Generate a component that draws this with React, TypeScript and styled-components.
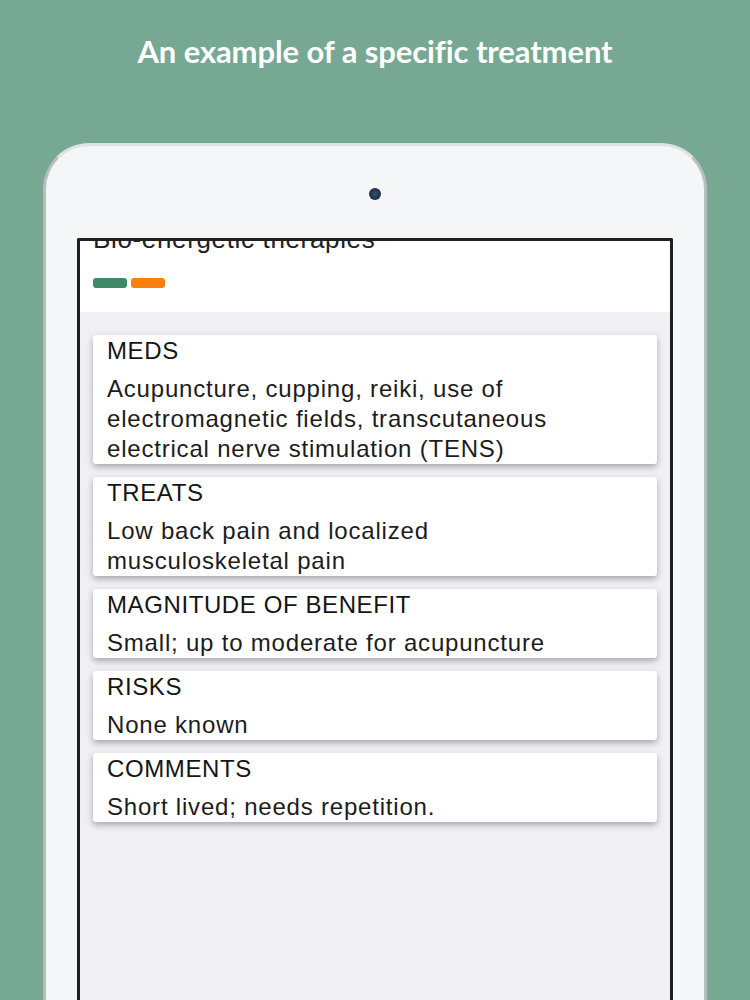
import React from 'react';
import styled, { createGlobalStyle } from 'styled-components';

const GlobalStyle = createGlobalStyle`
  html, body {
    margin: 0;
    padding: 0;
    background: #76a893;
  }
  body {
    font-family: "Liberation Sans", Arial, sans-serif;
  }
`;

const Page = styled.div`
  width: 750px;
  height: 1000px;
  overflow: hidden;
  display: flex;
  flex-direction: column;
  background: #76a893;
`;

const Headline = styled.h1`
  margin: 0;
  height: 143px;
  box-sizing: border-box;
  padding-top: 31px;
  text-align: center;
  font-family: Lato, "Open Sans", sans-serif;
  font-weight: 700;
  font-size: 31px;
  line-height: 40px;
  color: #ffffff;
  letter-spacing: -0.1px;
`;

const Device = styled.div`
  flex: 1;
  margin: 0 43px;
  box-sizing: border-box;
  display: flex;
  flex-direction: column;
  align-items: center;
  padding: 0 31px;
  background: #f4f6f8;
  border: 3px solid;
  border-color: #dfe2e4 #b9bdc0 transparent #b9bdc0;
  border-bottom: none;
  border-radius: 46px 46px 0 0;
`;

const Camera = styled.div`
  width: 12px;
  height: 12px;
  margin: 42px 0 38px;
  border-radius: 50%;
  background: radial-gradient(circle at 50% 50%, #34507a 0%, #263246 55%, #1c2330 100%);
`;

const Screen = styled.div`
  align-self: stretch;
  flex: 1;
  display: flex;
  flex-direction: column;
  border: 3px solid #202020;
  border-bottom: none;
  border-radius: 2px 2px 0 0;
  background: #efeff4;
  overflow: hidden;
`;

const Header = styled.div`
  height: 71px;
  box-sizing: border-box;
  background: #ffffff;
  padding: 0 13px;
  overflow: hidden;
`;

const HeaderTitle = styled.div`
  margin-top: -17px;
  font-size: 26px;
  line-height: 30px;
  letter-spacing: 0.65px;
  color: #222222;
  white-space: nowrap;
`;

const Tags = styled.div`
  display: flex;
  gap: 4px;
  margin-top: 24px;
`;

const Tag = styled.span<{ $color: string }>`
  width: 34px;
  height: 10px;
  border-radius: 3px;
  background: ${(p) => p.$color};
`;

const List = styled.div`
  display: flex;
  flex-direction: column;
  gap: 13px;
  padding: 23px 13px;
`;

const Card = styled.section`
  background: #ffffff;
  border-radius: 3px;
  padding: 1px 14px 0;
  box-shadow: 0 3px 6px rgba(0, 0, 0, 0.3);
`;

const CardTitle = styled.h2`
  margin: 0 0 8px;
  font-size: 24px;
  font-weight: 400;
  line-height: 30px;
  letter-spacing: 0.6px;
  color: #151515;
`;

const CardBody = styled.p`
  margin: 0;
  font-size: 24px;
  line-height: 30px;
  letter-spacing: 0.8px;
  color: #1c1c1c;
`;

const sections = [
  {
    title: 'MEDS',
    body: [
      'Acupuncture, cupping, reiki, use of',
      'electromagnetic fields, transcutaneous',
      'electrical nerve stimulation (TENS)',
    ],
  },
  {
    title: 'TREATS',
    body: ['Low back pain and localized', 'musculoskeletal pain'],
  },
  {
    title: 'MAGNITUDE OF BENEFIT',
    body: ['Small; up to moderate for acupuncture'],
  },
  { title: 'RISKS', body: ['None known'] },
  { title: 'COMMENTS', body: ['Short lived; needs repetition.'] },
];

export default function App() {
  return (
    <>
      <GlobalStyle />
      <Page>
        <Headline>An example of a specific treatment</Headline>
        <Device>
          <Camera />
          <Screen>
            <Header>
              <HeaderTitle>Bio-energetic therapies</HeaderTitle>
              <Tags>
                <Tag $color="#3f8a6b" />
                <Tag $color="#fb7f0c" />
              </Tags>
            </Header>
            <List>
              {sections.map((s) => (
                <Card key={s.title}>
                  <CardTitle>{s.title}</CardTitle>
                  <CardBody>
                    {s.body.map((line, i) => (
                      <React.Fragment key={i}>
                        {i > 0 && <br />}
                        {line}
                      </React.Fragment>
                    ))}
                  </CardBody>
                </Card>
              ))}
            </List>
          </Screen>
        </Device>
      </Page>
    </>
  );
}
